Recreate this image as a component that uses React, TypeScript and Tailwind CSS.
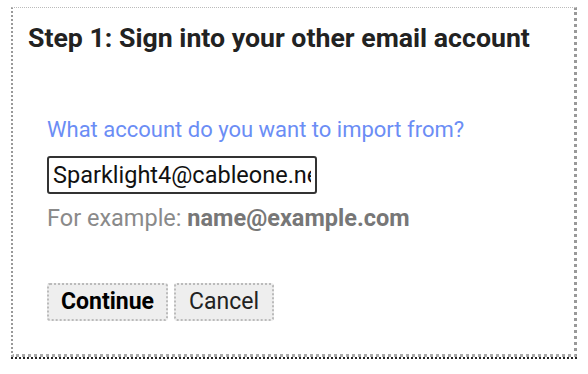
export default function App() {
  return (
    <div className="w-[588px] h-[374px] bg-white pt-[7px] pl-[11px] font-['Roboto',sans-serif]">
      <div className="w-[566px] border-b-2 border-dotted border-[#222]">
        <div className="h-[350px] border-t border-l-2 border-r-[3px] border-b-[3px] border-dotted border-t-[#bbb] border-l-[#999] border-r-[#999] border-b-[#aaa] bg-white pl-[15px] pt-[14px]">
          <h1 className="text-[26.7px] leading-[32px] font-bold text-[#222] whitespace-nowrap">
            Step 1: Sign into your other email account
          </h1>
          <div className="pl-[19px] pt-[63px]">
            <p className="text-[22px] leading-[26px] text-[#6b8df5] whitespace-nowrap">What account do you want to import from?</p>
            <input
              readOnly
              value="Sparklight4@cableone.net"
              className="mt-[13px] block w-[270px] h-[38px] rounded-[3px] border-2 border-[#333] px-[4px] text-[23.5px] text-[#111] outline-none"
            />
            <p className="mt-[10px] text-[23.5px] leading-[28px] text-[#8a8a8a] whitespace-nowrap">
              For example: <span className="font-bold text-[#777]">name@example.com</span>
            </p>
            <div className="mt-[51px] flex gap-[6px]">
              <button className="w-[121px] h-[38px] rounded-[3px] border-2 border-dotted border-[#bbb] bg-[#eee] text-[23px] font-bold text-black">
                Continue
              </button>
              <button className="w-[100px] h-[38px] rounded-[3px] border-2 border-dotted border-[#bbb] bg-[#eee] text-[23px] text-[#222]">
                Cancel
              </button>
            </div>
          </div>
        </div>
      </div>
    </div>
  );
}
